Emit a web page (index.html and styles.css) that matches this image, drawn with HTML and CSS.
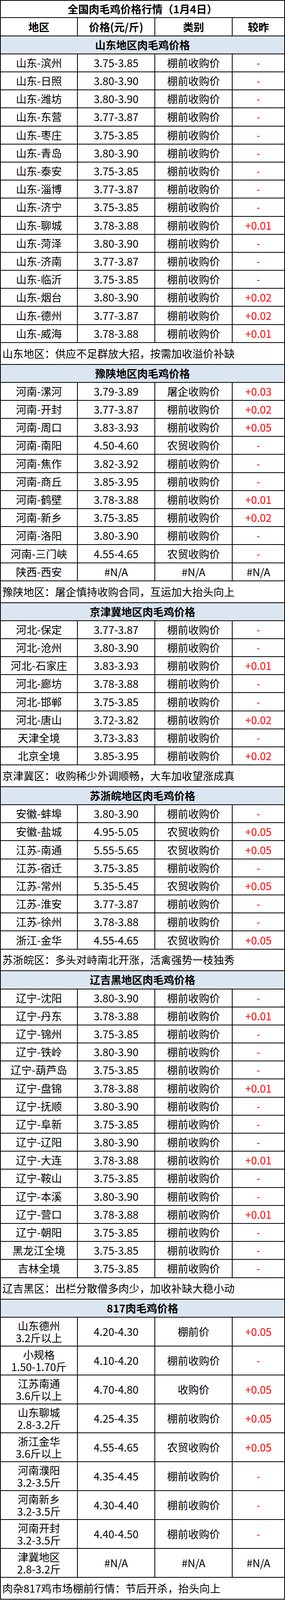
FILE: index.html
```html
<!DOCTYPE html>
<html lang="zh-CN">
<head>
<meta charset="utf-8">
<title>全国肉毛鸡价格行情</title>
<link rel="stylesheet" href="styles.css">
</head>
<body>
<div class="sheet">
  <div class="line title"><div class="cell span">全国肉毛鸡价格行情（1月4日）</div></div>
  <div class="line head"><div class="cell">地区</div><div class="cell">价格(元/斤)</div><div class="cell">类别</div><div class="cell">较昨</div></div>

  <div class="line section"><div class="cell span">山东地区肉毛鸡价格</div></div>
  <div class="line row"><div class="cell">山东-滨州</div><div class="cell">3.75-3.85</div><div class="cell">棚前收购价</div><div class="cell up">-</div></div>
  <div class="line row"><div class="cell">山东-日照</div><div class="cell">3.80-3.90</div><div class="cell">棚前收购价</div><div class="cell up">-</div></div>
  <div class="line row"><div class="cell">山东-潍坊</div><div class="cell">3.80-3.90</div><div class="cell">棚前收购价</div><div class="cell up">-</div></div>
  <div class="line row"><div class="cell">山东-东营</div><div class="cell">3.77-3.87</div><div class="cell">棚前收购价</div><div class="cell up">-</div></div>
  <div class="line row"><div class="cell">山东-枣庄</div><div class="cell">3.75-3.85</div><div class="cell">棚前收购价</div><div class="cell up">-</div></div>
  <div class="line row"><div class="cell">山东-青岛</div><div class="cell">3.80-3.90</div><div class="cell">棚前收购价</div><div class="cell up">-</div></div>
  <div class="line row"><div class="cell">山东-泰安</div><div class="cell">3.75-3.85</div><div class="cell">棚前收购价</div><div class="cell up">-</div></div>
  <div class="line row"><div class="cell">山东-淄博</div><div class="cell">3.77-3.87</div><div class="cell">棚前收购价</div><div class="cell up">-</div></div>
  <div class="line row"><div class="cell">山东-济宁</div><div class="cell">3.75-3.85</div><div class="cell">棚前收购价</div><div class="cell up">-</div></div>
  <div class="line row"><div class="cell">山东-聊城</div><div class="cell">3.78-3.88</div><div class="cell">棚前收购价</div><div class="cell up">+0.01</div></div>
  <div class="line row"><div class="cell">山东-菏泽</div><div class="cell">3.80-3.90</div><div class="cell">棚前收购价</div><div class="cell up">-</div></div>
  <div class="line row"><div class="cell">山东-济南</div><div class="cell">3.77-3.87</div><div class="cell">棚前收购价</div><div class="cell up">-</div></div>
  <div class="line row"><div class="cell">山东-临沂</div><div class="cell">3.75-3.85</div><div class="cell">棚前收购价</div><div class="cell up">-</div></div>
  <div class="line row"><div class="cell">山东-烟台</div><div class="cell">3.80-3.90</div><div class="cell">棚前收购价</div><div class="cell up">+0.02</div></div>
  <div class="line row"><div class="cell">山东-德州</div><div class="cell">3.77-3.87</div><div class="cell">棚前收购价</div><div class="cell up">+0.02</div></div>
  <div class="line row"><div class="cell">山东-威海</div><div class="cell">3.78-3.88</div><div class="cell">棚前收购价</div><div class="cell up">+0.01</div></div>
  <div class="line note"><div class="cell span">山东地区：供应不足群放大招，按需加收溢价补缺</div></div>

  <div class="line section"><div class="cell span">豫陕地区肉毛鸡价格</div></div>
  <div class="line row"><div class="cell">河南-漯河</div><div class="cell">3.79-3.89</div><div class="cell">屠企收购价</div><div class="cell up">+0.03</div></div>
  <div class="line row"><div class="cell">河南-开封</div><div class="cell">3.77-3.87</div><div class="cell">棚前收购价</div><div class="cell up">+0.02</div></div>
  <div class="line row"><div class="cell">河南-周口</div><div class="cell">3.83-3.93</div><div class="cell">棚前收购价</div><div class="cell up">+0.05</div></div>
  <div class="line row"><div class="cell">河南-南阳</div><div class="cell">4.50-4.60</div><div class="cell">农贸收购价</div><div class="cell up">-</div></div>
  <div class="line row"><div class="cell">河南-焦作</div><div class="cell">3.82-3.92</div><div class="cell">棚前收购价</div><div class="cell up">-</div></div>
  <div class="line row"><div class="cell">河南-商丘</div><div class="cell">3.85-3.95</div><div class="cell">棚前收购价</div><div class="cell up">-</div></div>
  <div class="line row"><div class="cell">河南-鹤壁</div><div class="cell">3.78-3.88</div><div class="cell">棚前收购价</div><div class="cell up">+0.01</div></div>
  <div class="line row"><div class="cell">河南-新乡</div><div class="cell">3.75-3.85</div><div class="cell">棚前收购价</div><div class="cell up">+0.02</div></div>
  <div class="line row"><div class="cell">河南-洛阳</div><div class="cell">3.80-3.90</div><div class="cell">棚前收购价</div><div class="cell up">-</div></div>
  <div class="line row"><div class="cell">河南-三门峡</div><div class="cell">4.55-4.65</div><div class="cell">农贸收购价</div><div class="cell up">-</div></div>
  <div class="line row"><div class="cell">陕西-西安</div><div class="cell">#N/A</div><div class="cell">#N/A</div><div class="cell">#N/A</div></div>
  <div class="line note"><div class="cell span">豫陕地区：屠企慎持收购合同，互运加大抬头向上</div></div>

  <div class="line section"><div class="cell span">京津冀地区肉毛鸡价格</div></div>
  <div class="line row"><div class="cell">河北-保定</div><div class="cell">3.77-3.87</div><div class="cell">棚前收购价</div><div class="cell up">-</div></div>
  <div class="line row"><div class="cell">河北-沧州</div><div class="cell">3.80-3.90</div><div class="cell">棚前收购价</div><div class="cell up">-</div></div>
  <div class="line row"><div class="cell">河北-石家庄</div><div class="cell">3.83-3.93</div><div class="cell">棚前收购价</div><div class="cell up">+0.01</div></div>
  <div class="line row"><div class="cell">河北-廊坊</div><div class="cell">3.78-3.88</div><div class="cell">棚前收购价</div><div class="cell up">-</div></div>
  <div class="line row"><div class="cell">河北-邯郸</div><div class="cell">3.75-3.85</div><div class="cell">棚前收购价</div><div class="cell up">-</div></div>
  <div class="line row"><div class="cell">河北-唐山</div><div class="cell">3.72-3.82</div><div class="cell">棚前收购价</div><div class="cell up">+0.02</div></div>
  <div class="line row"><div class="cell">天津全境</div><div class="cell">3.73-3.83</div><div class="cell">棚前收购价</div><div class="cell up">-</div></div>
  <div class="line row"><div class="cell">北京全境</div><div class="cell">3.85-3.95</div><div class="cell">棚前收购价</div><div class="cell up">+0.02</div></div>
  <div class="line note"><div class="cell span">京津冀区：收购稀少外调顺畅，大车加收望涨成真</div></div>

  <div class="line section"><div class="cell span">苏浙皖地区肉毛鸡价格</div></div>
  <div class="line row"><div class="cell">安徽-蚌埠</div><div class="cell">3.80-3.90</div><div class="cell">棚前收购价</div><div class="cell up">-</div></div>
  <div class="line row"><div class="cell">安徽-盐城</div><div class="cell">4.95-5.05</div><div class="cell">农贸收购价</div><div class="cell up">+0.05</div></div>
  <div class="line row"><div class="cell">江苏-南通</div><div class="cell">5.55-5.65</div><div class="cell">农贸收购价</div><div class="cell up">+0.05</div></div>
  <div class="line row"><div class="cell">江苏-宿迁</div><div class="cell">3.75-3.85</div><div class="cell">棚前收购价</div><div class="cell up">-</div></div>
  <div class="line row"><div class="cell">江苏-常州</div><div class="cell">5.35-5.45</div><div class="cell">农贸收购价</div><div class="cell up">+0.05</div></div>
  <div class="line row"><div class="cell">江苏-淮安</div><div class="cell">3.77-3.87</div><div class="cell">棚前收购价</div><div class="cell up">-</div></div>
  <div class="line row"><div class="cell">江苏-徐州</div><div class="cell">3.78-3.88</div><div class="cell">棚前收购价</div><div class="cell up">-</div></div>
  <div class="line row"><div class="cell">浙江-金华</div><div class="cell">4.55-4.65</div><div class="cell">农贸收购价</div><div class="cell up">+0.05</div></div>
  <div class="line note"><div class="cell span">苏浙皖区：多头对峙南北开涨，活禽强势一枝独秀</div></div>

  <div class="line section"><div class="cell span">辽吉黑地区肉毛鸡价格</div></div>
  <div class="line row"><div class="cell">辽宁-沈阳</div><div class="cell">3.80-3.90</div><div class="cell">棚前收购价</div><div class="cell up">-</div></div>
  <div class="line row"><div class="cell">辽宁-丹东</div><div class="cell">3.78-3.88</div><div class="cell">棚前收购价</div><div class="cell up">+0.01</div></div>
  <div class="line row"><div class="cell">辽宁-锦州</div><div class="cell">3.75-3.85</div><div class="cell">棚前收购价</div><div class="cell up">-</div></div>
  <div class="line row"><div class="cell">辽宁-铁岭</div><div class="cell">3.80-3.90</div><div class="cell">棚前收购价</div><div class="cell up">-</div></div>
  <div class="line row"><div class="cell">辽宁-葫芦岛</div><div class="cell">3.75-3.85</div><div class="cell">棚前收购价</div><div class="cell up">-</div></div>
  <div class="line row"><div class="cell">辽宁-盘锦</div><div class="cell">3.78-3.88</div><div class="cell">棚前收购价</div><div class="cell up">+0.01</div></div>
  <div class="line row"><div class="cell">辽宁-抚顺</div><div class="cell">3.80-3.90</div><div class="cell">棚前收购价</div><div class="cell up">-</div></div>
  <div class="line row"><div class="cell">辽宁-阜新</div><div class="cell">3.75-3.85</div><div class="cell">棚前收购价</div><div class="cell up">-</div></div>
  <div class="line row"><div class="cell">辽宁-辽阳</div><div class="cell">3.80-3.90</div><div class="cell">棚前收购价</div><div class="cell up">-</div></div>
  <div class="line row"><div class="cell">辽宁-大连</div><div class="cell">3.78-3.88</div><div class="cell">棚前收购价</div><div class="cell up">+0.01</div></div>
  <div class="line row"><div class="cell">辽宁-鞍山</div><div class="cell">3.75-3.85</div><div class="cell">棚前收购价</div><div class="cell up">-</div></div>
  <div class="line row"><div class="cell">辽宁-本溪</div><div class="cell">3.80-3.90</div><div class="cell">棚前收购价</div><div class="cell up">-</div></div>
  <div class="line row"><div class="cell">辽宁-营口</div><div class="cell">3.78-3.88</div><div class="cell">棚前收购价</div><div class="cell up">+0.01</div></div>
  <div class="line row"><div class="cell">辽宁-朝阳</div><div class="cell">3.75-3.85</div><div class="cell">棚前收购价</div><div class="cell up">-</div></div>
  <div class="line row"><div class="cell">黑龙江全境</div><div class="cell">3.75-3.85</div><div class="cell">棚前收购价</div><div class="cell up">-</div></div>
  <div class="line row"><div class="cell">吉林全境</div><div class="cell">3.75-3.85</div><div class="cell">棚前收购价</div><div class="cell up">-</div></div>
  <div class="line note"><div class="cell span">辽吉黑区：出栏分散僧多肉少，加收补缺大稳小动</div></div>

  <div class="line section"><div class="cell span">817肉毛鸡价格</div></div>
  <div class="line row2"><div class="cell two">山东德州<br>3.2斤以上</div><div class="cell">4.20-4.30</div><div class="cell">棚前价</div><div class="cell up">+0.05</div></div>
  <div class="line row2"><div class="cell two">小规格<br>1.50-1.70斤</div><div class="cell">4.10-4.20</div><div class="cell">棚前收购价</div><div class="cell up">-</div></div>
  <div class="line row2"><div class="cell two">江苏南通<br>3.6斤以上</div><div class="cell">4.70-4.80</div><div class="cell">收购价</div><div class="cell up">+0.05</div></div>
  <div class="line row2"><div class="cell two">山东聊城<br>2.8-3.2斤</div><div class="cell">4.25-4.35</div><div class="cell">棚前收购价</div><div class="cell up">+0.05</div></div>
  <div class="line row2"><div class="cell two">浙江金华<br>3.6斤以上</div><div class="cell">4.55-4.65</div><div class="cell">农贸收购价</div><div class="cell up">+0.05</div></div>
  <div class="line row2"><div class="cell two">河南濮阳<br>3.2-3.5斤</div><div class="cell">4.35-4.45</div><div class="cell">棚前收购价</div><div class="cell up">-</div></div>
  <div class="line row2"><div class="cell two">河南新乡<br>3.2-3.5斤</div><div class="cell">4.30-4.40</div><div class="cell">棚前收购价</div><div class="cell up">-</div></div>
  <div class="line row2"><div class="cell two">河南开封<br>3.2-3.5斤</div><div class="cell">4.40-4.50</div><div class="cell">棚前收购价</div><div class="cell up">-</div></div>
  <div class="line row2"><div class="cell two">津冀地区<br>2.8-3.2斤</div><div class="cell">#N/A</div><div class="cell">#N/A</div><div class="cell">#N/A</div></div>
  <div class="line note last"><div class="cell span">肉杂817鸡市场棚前行情：节后开杀，抬头向上</div></div>
</div>
</body>
</html>
```

FILE: styles.css
```css
html, body {
  margin: 0;
  padding: 0;
  background: #ffffff;
}

/* The capture frame is 4096px tall, so the sheet's rows are scaled
   to fit the whole table (reference 4701px) inside it. */
.sheet {
  width: 729px;
  box-sizing: border-box;
  padding: 2px;
  background: #000000;
  display: flex;
  flex-direction: column;
  gap: 2px;
  font-family: "Noto Sans CJK SC", "Microsoft YaHei", sans-serif;
  font-size: 27px;
  color: #000000;
}

.line {
  display: grid;
  grid-template-columns: 195px 196px 196px 132px;
  column-gap: 2px;
}

.cell {
  background: #ffffff;
  display: flex;
  align-items: center;
  justify-content: center;
  text-align: center;
  white-space: nowrap;
  line-height: 34px;
  overflow: hidden;
}

.cell.two {
  line-height: 31px;
}

.span {
  grid-column: 1 / -1;
}

.title { height: 42.46px; }
.head { height: 44.2px; }
.row { height: 44.2px; }
.row2 { height: 71.93px; }

.title .cell,
.head .cell,
.section .cell {
  font-weight: 700;
}

.section { height: 44.2px; }
.section .cell { background: #dce6f1; }

.note { height: 53.73px; }
.note.last { height: 54.6px; }
.note .cell {
  justify-content: flex-start;
  padding-left: 4px;
}

.up {
  color: #ff0000;
}
```
